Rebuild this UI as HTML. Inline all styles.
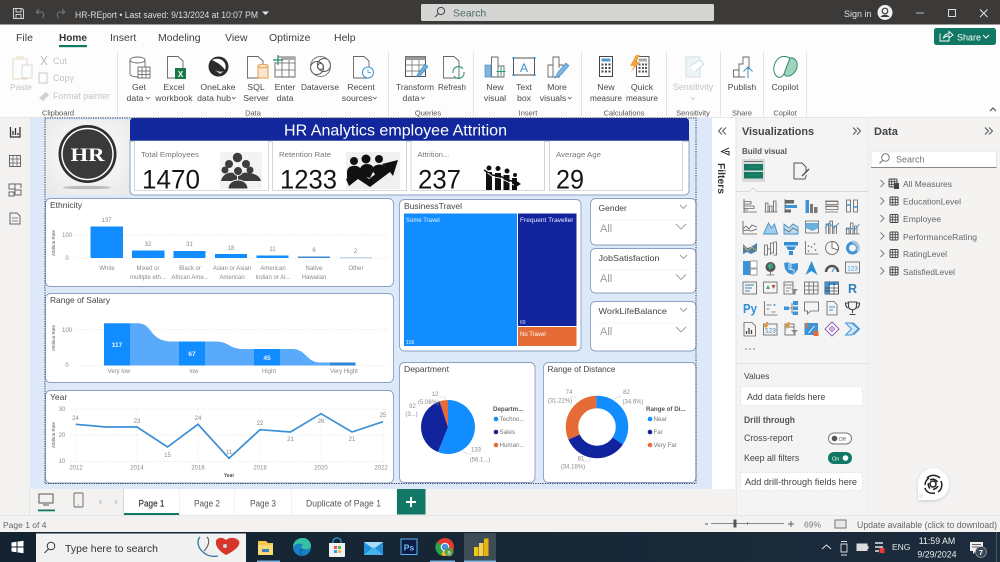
<!DOCTYPE html>
<html lang="en"><head><meta charset="utf-8"><title>HR Analytics</title>
<style>
html,body{margin:0;padding:0;background:#fff;width:1000px;height:562px;overflow:hidden}
svg{display:block;font-family:"Liberation Sans",sans-serif;filter:blur(.35px)}
.r{font-size:8.7px;fill:#4a4a4a;text-anchor:middle}
.d{font-size:9px;fill:#c4c4c4}
.gl{font-size:7.5px;fill:#555;text-anchor:middle}
.t{font-size:10.5px;fill:#3f3f3f}
.ct{font-size:8.5px;fill:#444}
.c{font-size:6px;fill:#8a8a8a;text-anchor:middle}
.a{font-size:5px;fill:#555;text-anchor:middle}
.k{font-size:7.5px;fill:#777}
.n{font-size:27px;fill:#151515}
.p{font-size:9px;fill:#444}
.tr{font-size:8.5px;fill:#666}
.s{stroke:#666;fill:none;stroke-width:.85}
.l{stroke:#666;fill:none;stroke-width:.9}
.sc{stroke:#8a8a8a;fill:none;stroke-width:1}
.b{fill:#3d93d6}
.card{fill:#fff;stroke:#8ba0c2;stroke-width:.9}
.grid{stroke:#e8e8e8;stroke-width:.7;stroke-dasharray:1.5 1.5}
</style></head>
<body>
<svg width="1000" height="562" viewBox="0 0 1000 562" xmlns="http://www.w3.org/2000/svg">
<defs>
<symbol id="tbl" viewBox="0 0 10 10"><rect x="1" y="1" width="8" height="8" rx="1" fill="none" stroke="#444" stroke-width="1"/><path d="M1 3.7H9M1 6.3H9M3.7 1V9M6.3 1V9" stroke="#444" stroke-width=".8"/></symbol>
</defs>
<!-- base -->
<rect width="1000" height="562" fill="#fdfdfd"/>
<!-- title bar -->
<rect width="1000" height="24.5" fill="#3b3a39"/>
<g fill="none" stroke="#d0d0d0" stroke-width="1">
<path d="M13.5 8.5H22L23.5 10V18.5H13.5Z"/><path d="M16 8.5V12H21V8.5M16 18.5V14.5H21V18.5"/>
</g>
<path d="M36 12L39 9M36 12L39 14M36 12H42A3.5 3.5 0 0 1 42 18" fill="none" stroke="#777" stroke-width="1"/>
<path d="M65 12L62 9M65 12L62 14M65 12H59A3.5 3.5 0 0 0 59 18" fill="none" stroke="#777" stroke-width="1"/>
<text x="75" y="18" font-size="9" fill="#dedede" textLength="183" lengthAdjust="spacingAndGlyphs">HR-REport • Last saved: 9/13/2024 at 10:07 PM</text>
<path d="M262 11.5h7l-3.5 3.5z" fill="#e8e8e8"/>
<rect x="421" y="4" width="293" height="17" rx="1.5" fill="#d5d6d3"/>
<circle cx="441" cy="11" r="3.6" fill="none" stroke="#444" stroke-width="1"/><path d="M438.4 13.6L435 17" stroke="#444" stroke-width="1"/>
<text x="453" y="16.5" font-size="10.5" fill="#4f6b66">Search</text>
<text x="844" y="17" font-size="9" fill="#e0e0e0">Sign in</text>
<circle cx="885" cy="12.5" r="7.5" fill="#f2f2f2"/><circle cx="885" cy="11" r="2.8" fill="none" stroke="#3b3a39" stroke-width="1.2"/><path d="M880.5 17a5 4 0 0 1 9 0" fill="#3b3a39"/>
<path d="M916 13H924" stroke="#bbb" stroke-width="1"/>
<rect x="948.5" y="9.5" width="7" height="7" fill="none" stroke="#ddd" stroke-width="1"/>
<path d="M980 9.5L987.5 17M987.5 9.5L980 17" stroke="#e5e5e5" stroke-width="1"/>
<!-- tabs -->
<text x="16" y="41" class="t">File</text>
<text x="59" y="41" class="t" style="font-weight:700;fill:#333" textLength="28" lengthAdjust="spacingAndGlyphs">Home</text>
<rect x="59" y="45" width="28" height="2.2" fill="#117865"/>
<text x="110" y="41" class="t">Insert</text>
<text x="158" y="41" class="t">Modeling</text>
<text x="225" y="41" class="t">View</text>
<text x="269" y="41" class="t">Optimize</text>
<text x="334" y="41" class="t">Help</text>
<rect x="934" y="28" width="62" height="17" rx="2.5" fill="#117865"/>
<path d="M940 33.5V41H949V38M943.5 38C944 35 946 33.8 949 33.8V31.5L953 35L949 38V36C947 36 945 36.5 943.5 38Z" fill="none" stroke="#fff" stroke-width=".9"/>
<text x="957" y="40.5" font-size="9" fill="#fff">Share</text>
<path d="M983 35l3 3 3-3" fill="none" stroke="#fff" stroke-width="1"/>
<!-- ribbon separators -->
<g stroke="#e3e3e3" stroke-width="1">
<path d="M117.5 52V116M388.5 52V116M473.5 52V116M581.5 52V116M666.5 52V116M720.5 52V116M763.5 52V116M806.5 52V116"/>
</g>
<!-- clipboard -->
<g fill="none" stroke="#e9d9c4" stroke-width="1"><path d="M13 59H27V79H13Z"/><path d="M17 59V57H23V59"/></g>
<rect x="22" y="65" width="10" height="13" fill="#fdfdfd" stroke="#d8d8d8"/>
<text x="21" y="90" class="d" text-anchor="middle" style="font-size:8.5px">Paste</text>
<path d="M41 56L47 65M47 56L41 65" stroke="#bcbcbc" fill="none"/><text x="53" y="64" class="d">Cut</text>
<rect x="39" y="73" width="8" height="10" fill="none" stroke="#c9c9c9"/><text x="53" y="81" class="d">Copy</text>
<path d="M39 98L46 92L49 95L43 101Z" fill="#cfcfcf"/><text x="53" y="99" class="d" textLength="57" lengthAdjust="spacingAndGlyphs">Format painter</text>
<text x="58" y="115.5" class="gl">Clipboard</text>
<!-- get data -->
<g class="l"><ellipse cx="137.5" cy="60" rx="7.5" ry="3"/><path d="M130 60V74C130 76 134 77 138 77M145 60V67"/></g>
<rect x="138" y="67" width="12" height="11" fill="#fdfdfd" stroke="#555" stroke-width=".8"/><path d="M138 71H150M138 74.500H150M142 67V78M146 67V78" stroke="#555" stroke-width=".7"/>
<text x="139" y="90" class="r">Get</text><text x="135" y="101" class="r">data</text><path d="M146 97l1.800 2 1.800-2" class="l"/>
<!-- excel -->
<path d="M167.500 56.500H178L183 61V78H167.500Z" class="l"/><rect x="175" y="68" width="11" height="11" fill="#1a7a45"/><text x="180.500" y="77" font-size="8" font-weight="700" fill="#fff" text-anchor="middle">X</text>
<text x="174" y="90" class="r">Excel</text><text x="174" y="101" class="r">workbook</text>
<!-- onelake -->
<circle cx="218.500" cy="66.500" r="10" fill="#2b2b2b"/><path d="M212 60C220 56 228 62 225 70C221 64 216 62 212 60Z" fill="#fff"/><path d="M215 70C219 72 222 72 224 71L220 74Z" fill="#cfcfcf"/>
<text x="218" y="90" class="r">OneLake</text><text x="214" y="101" class="r">data hub</text><path d="M232 97l1.800 2 1.800-2" class="l"/>
<!-- sql -->
<path d="M247.500 56.500H258L263 61V78H247.500Z" class="l"/><path d="M258 66V78H268V66" fill="#fbe7cf" stroke="#e69b45"/><ellipse cx="263" cy="66" rx="5" ry="1.800" fill="#fbe7cf" stroke="#e69b45"/>
<text x="256" y="90" class="r">SQL</text><text x="256" y="101" class="r">Server</text>
<!-- enter data -->
<path d="M278 57H295V77H275V62" class="l"/><path d="M275 63H295M275 70H295M282 57V77M289 57V77" stroke="#666" stroke-width=".8"/><rect x="282" y="57" width="13" height="3" fill="#aaa"/><path d="M273 60H283M278 55V65" stroke="#1f8a5b" stroke-width="1.200"/>
<text x="285" y="90" class="r">Enter</text><text x="285" y="101" class="r">data</text>
<!-- dataverse -->
<g fill="none" stroke="#555" stroke-width="1"><circle cx="317" cy="68" r="6.500"/><circle cx="324" cy="65" r="6.500"/><circle cx="320.500" cy="66.500" r="10" stroke="#777"/><circle cx="320.500" cy="66.500" r="3"/></g>
<text x="320" y="90" class="r" textLength="38" lengthAdjust="spacingAndGlyphs">Dataverse</text>
<!-- recent -->
<path d="M353.500 56.500H364L369 61V78H353.500Z" class="l"/><circle cx="368" cy="72.500" r="5.500" fill="#fff" stroke="#3b93cc"/><path d="M368 69.500V72.500H371" fill="none" stroke="#3b93cc" stroke-width=".8"/>
<text x="361" y="90" class="r">Recent</text><text x="357" y="101" class="r">sources</text><path d="M373 97l1.800 2 1.800-2" class="l"/>
<text x="253" y="115.500" class="gl">Data</text>
<!-- transform -->
<rect x="405.500" y="56.500" width="20" height="20" fill="none" stroke="#555"/><rect x="405.500" y="56.500" width="20" height="3.500" fill="#999"/><path d="M405.500 65H425.500M405.500 71H425.500M412 60V77M419 60V77" stroke="#666" stroke-width=".7"/>
<path d="M416 77L419 72L425 64L428 66.500L421 75Z" fill="#6fb1de" stroke="#3b7fb5" stroke-width=".6"/>
<text x="415" y="90" class="r" textLength="38" lengthAdjust="spacingAndGlyphs">Transform</text><text x="411" y="101" class="r">data</text><path d="M421 97l1.800 2 1.800-2" class="l"/>
<!-- refresh -->
<path d="M443.500 56.500H454L459 61V78H443.500Z" class="l"/><path d="M453 73A5.500 5.500 0 0 1 463 69M464 72A5.500 5.500 0 0 1 454 76" fill="none" stroke="#2f9a74" stroke-width="1.100"/>
<text x="452" y="90" class="r" textLength="28" lengthAdjust="spacingAndGlyphs">Refresh</text>
<text x="428" y="115.500" class="gl">Queries</text>
<line x1="473.500" y1="52" x2="473.500" y2="116" stroke="#e3e3e3"/>
<!-- new visual -->
<rect x="485" y="65" width="6" height="12" fill="#7db6e2" stroke="#3a86c2" stroke-width=".6"/><path d="M491.500 77V57H498V77M498 66H504V77H491.500" class="l"/><path d="M501 67V76M496.500 71.500H505.500" stroke="#2f9a74" stroke-width="1"/>
<text x="495" y="90" class="r">New</text><text x="495" y="101" class="r">visual</text>
<!-- text box -->
<rect x="513.500" y="58" width="21" height="17" fill="none" stroke="#555"/><g fill="#3b8fcf"><rect x="512.500" y="57" width="2" height="2"/><rect x="533.500" y="57" width="2" height="2"/><rect x="512.500" y="74" width="2" height="2"/><rect x="533.500" y="74" width="2" height="2"/></g>
<text x="524" y="72" font-size="12" fill="#3b8fcf" text-anchor="middle">A</text>
<text x="524" y="90" class="r">Text</text><text x="524" y="101" class="r">box</text>
<!-- more visuals -->
<path d="M548 65H553V77H548ZM553 77V57H559V68M559 65H563V69M553 77H560" class="l"/><path d="M555 78L558 72L566 63L569 65.500L561 75Z" fill="#7db6e2" stroke="#3a86c2" stroke-width=".6"/>
<text x="557" y="90" class="r">More</text><text x="553" y="101" class="r">visuals</text><path d="M568 97l1.800 2 1.800-2" class="l"/>
<text x="528" y="115.500" class="gl">Insert</text>
<!-- new measure -->
<rect x="599.500" y="56.500" width="13" height="20" fill="#fff" stroke="#444"/><rect x="601.500" y="58.500" width="9" height="3" fill="#4a9ad4"/><g fill="#444"><rect x="601.500" y="63.500" width="2" height="2"/><rect x="605" y="63.500" width="2" height="2"/><rect x="608.500" y="63.500" width="2" height="2"/><rect x="601.500" y="67" width="2" height="2"/><rect x="605" y="67" width="2" height="2"/><rect x="608.500" y="67" width="2" height="2"/><rect x="601.500" y="70.500" width="2" height="2"/><rect x="605" y="70.500" width="2" height="2"/><rect x="608.500" y="70.500" width="2" height="2"/></g>
<text x="606" y="90" class="r">New</text><text x="606" y="101" class="r" textLength="32" lengthAdjust="spacingAndGlyphs">measure</text>
<!-- quick measure -->
<rect x="636.500" y="56.500" width="12.500" height="20" fill="#fff" stroke="#555"/><rect x="638.500" y="58.500" width="8.500" height="3" fill="#aaa"/><g fill="#555"><rect x="638.500" y="63.500" width="2" height="2"/><rect x="642" y="63.500" width="2" height="2"/><rect x="645" y="63.500" width="2" height="2"/><rect x="638.500" y="67" width="2" height="2"/><rect x="642" y="67" width="2" height="2"/><rect x="645" y="67" width="2" height="2"/><rect x="638.500" y="70.500" width="2" height="2"/><rect x="642" y="70.500" width="2" height="2"/><rect x="645" y="70.500" width="2" height="2"/></g>
<path d="M636 55L630 66H634L631 72L640 62H636L640 55Z" fill="#f2a33a"/>
<text x="642" y="90" class="r">Quick</text><text x="642" y="101" class="r" textLength="32" lengthAdjust="spacingAndGlyphs">measure</text>
<text x="624" y="115.500" class="gl">Calculations</text>
<!-- sensitivity -->
<path d="M686 57H700V77H686Z" fill="#eef5f8" stroke="#cfe0e6"/><path d="M690 66L700 60L704 64L695 72" fill="#fff" stroke="#cfd8db"/>
<text x="693" y="90" class="d" text-anchor="middle">Sensitivity</text><path d="M691 97.500l1.800 2 1.800-2" fill="none" stroke="#ccc"/>
<text x="693" y="115.500" class="gl">Sensitivity</text>
<!-- publish -->
<path d="M733.500 77V70H739V77ZM739 77V64H743V57H749V69M739 77H745" class="l"/><path d="M748 78V68M743.500 71.500L748 67L752.500 71.500" fill="none" stroke="#3f8fb5" stroke-width="1"/>
<text x="742" y="90" class="r">Publish</text><text x="742" y="115.500" class="gl">Share</text>
<!-- copilot -->
<path d="M779 58C783 55 788 57 790 58L784 74C781 79 777 78 775 74C772 68 775 61 779 58Z" fill="#fff" stroke="#2f8a6b" stroke-width="1"/>
<path d="M790 58C795 57 798 62 797 67C796 73 790 77 786 76L784 74L790 58Z" fill="#9fd5bd" stroke="#2f8a6b" stroke-width="1"/>
<text x="785" y="90" class="r">Copilot</text><text x="785" y="115.500" class="gl">Copilot</text>
<path d="M990 111l3-3 3 3" fill="none" stroke="#444" stroke-width="1"/>

<!-- left rail + canvas -->
<rect x="0" y="117" width="1000" height="399" fill="#f3f2f1"/>
<line x1="0" y1="117.500" x2="1000" y2="117.500" stroke="#e6e6e6"/>
<rect x="30" y="118" width="682" height="371" fill="#dde9f9"/>
<g>
<path d="M10.500 127V137H20V127M13 135V131M15.500 135V128M18 135V133" fill="none" stroke="#333" stroke-width="1.300"/>
<rect x="9.500" y="155.500" width="11" height="11" fill="none" stroke="#666"/><path d="M9.500 159H20.500M9.500 163H20.500M13 155.500V166.500M17 155.500V166.500" stroke="#666" stroke-width=".8"/>
<rect x="9" y="184" width="6" height="5" fill="none" stroke="#666"/><rect x="15" y="190" width="6" height="5" fill="none" stroke="#666"/><rect x="9" y="192" width="5" height="4" fill="none" stroke="#666"/><path d="M15 184H21V188" fill="none" stroke="#666"/>
<path d="M10 213H17L20 216V224H10Z" fill="none" stroke="#666"/><path d="M12 218H18M12 221H18" stroke="#666" stroke-width=".8"/>
</g>
<!-- logo -->
<defs><radialGradient id="lg" cx=".5" cy=".45" r=".7"><stop offset="0" stop-color="#fff"/><stop offset="1" stop-color="#e9e9e9"/></radialGradient></defs>
<rect x="46" y="120" width="84" height="75" fill="url(#lg)"/>
<ellipse cx="87" cy="187.500" rx="24" ry="1.800" fill="#999" opacity=".6"/>
<circle cx="87.500" cy="154" r="29" fill="#2f2f2f"/><circle cx="87.500" cy="154" r="25.500" fill="#3a3a3a" stroke="#fff" stroke-width="1.500"/>
<text x="87.500" y="161" font-weight="700" font-size="19" fill="#fff" text-anchor="middle" textLength="34" lengthAdjust="spacingAndGlyphs" style="font-family:'Liberation Serif',serif">HR</text>
<!-- header -->
<path d="M130 141V122Q130 118 134 118H685Q689 118 689 122V141Z" fill="#12279b"/>
<text x="284" y="135.500" font-size="15.500" fill="#fff" textLength="223" lengthAdjust="spacingAndGlyphs">HR Analytics employee Attrition</text>
<path d="M130 141H689V190Q689 195 684 195H135Q130 195 130 190Z" fill="#fff" stroke="#8ca3c6" stroke-width="1"/>
<g fill="#fff" stroke="#c8ccd2" stroke-width=".8">
<path d="M134.500 141V190.500H268.500V141"/><path d="M272.500 141V190.500H406.500V141"/><path d="M411 141V190.500H544.500V141"/><path d="M549.500 141V190.500H682.500V141"/>
</g>
<text x="141" y="157" class="k" textLength="58" lengthAdjust="spacingAndGlyphs">Total Employees</text>
<text x="279" y="157" class="k" textLength="52" lengthAdjust="spacingAndGlyphs">Retention Rate</text>
<text x="417.500" y="157" class="k">Attrition...</text>
<text x="556" y="157" class="k" textLength="45" lengthAdjust="spacingAndGlyphs">Average Age</text>
<text x="142" y="188.500" class="n" textLength="58" lengthAdjust="spacingAndGlyphs">1470</text>
<text x="280" y="188.500" class="n" textLength="57" lengthAdjust="spacingAndGlyphs">1233</text>
<text x="418" y="188.500" class="n" textLength="43" lengthAdjust="spacingAndGlyphs">237</text>
<text x="556" y="188.500" class="n" textLength="28" lengthAdjust="spacingAndGlyphs">29</text>
<!-- group icon -->
<rect x="220" y="152" width="42" height="37" fill="#f3f3f3"/>
<g fill="#3d3d3d">
<circle cx="237.500" cy="157.500" r="4.700"/><circle cx="229" cy="164" r="4"/><circle cx="246" cy="164" r="4"/><circle cx="225" cy="170" r="3.500"/><circle cx="250" cy="170" r="3.500"/>
<path d="M221 183C221 172 235 170 237 176V181H221Z"/><path d="M261 182C261 172 240 170 238 176V181H261Z"/>
<circle cx="238" cy="171" r="4.500" stroke="#f3f3f3" stroke-width="1"/>
<path d="M228 189C228 177 248 177 248 189Z" stroke="#f3f3f3" stroke-width="1"/>
</g>
<!-- retention icon -->
<rect x="346" y="152" width="54" height="37" fill="#f0f0f0"/>
<g fill="#111">
<circle cx="354" cy="161" r="4"/><circle cx="366" cy="159" r="4.500"/><circle cx="379" cy="159" r="4"/>
<path d="M347 172C347 164 360 164 361 170L361 176L347 178Z"/><path d="M360 170C360 162 374 162 374 170L370 178L360 176Z"/><path d="M372 170C373 163 385 163 385 168L376 176Z"/>
<path d="M346 179L358 172L369 179L385 167L382 164L398 160L393 176L390 172L370 187L358 179L349 186Z"/>
</g>
<!-- attrition icon -->
<g fill="#111">
<circle cx="489" cy="168" r="2.500"/><rect x="486" y="172" width="6" height="18"/>
<circle cx="498" cy="168.500" r="2.500"/><rect x="495" y="173" width="6" height="17"/>
<circle cx="507" cy="171" r="2.500"/><rect x="503.500" y="175" width="6" height="15"/>
<circle cx="515" cy="175" r="2"/><rect x="512" y="178" width="5" height="12"/>
</g>
<path d="M484 170L492 175L500 176L508 180L519 183" fill="none" stroke="#111" stroke-width="1.500"/>
<path d="M487.500 173L493 177L500 178L508 182L514 185" fill="none" stroke="#fff" stroke-width=".9"/>
<path d="M516 181L521 184L516 187Z" fill="#111"/>

<!-- ethnicity -->
<rect x="45.500" y="198.500" width="348" height="88" rx="5" class="card"/>
<text x="50" y="208" class="ct">Ethnicity</text>
<text transform="translate(55,243) rotate(-90)" class="a" style="font-size:4.500px">Attrition Rate</text>
<text x="67" y="237" class="c">100</text><text x="67" y="260" class="c">0</text>
<path d="M75 235H388M75 258H388" class="grid"/>
<rect x="90.500" y="226.500" width="32.500" height="31.500" fill="#118dff"/>
<rect x="132" y="250.500" width="32.500" height="7.500" fill="#118dff"/>
<rect x="173.500" y="251" width="32" height="7" fill="#118dff"/>
<rect x="215" y="254" width="32" height="4" fill="#118dff"/>
<rect x="256.500" y="255.500" width="32" height="2.500" fill="#118dff"/>
<rect x="298" y="256.500" width="32" height="1.500" fill="#3d8bd0"/>
<rect x="339.500" y="257" width="32.500" height="1.500" fill="#c2d8e4"/>
<text x="106.500" y="222" class="c">137</text><text x="148" y="246" class="c">32</text><text x="189.500" y="246" class="c">31</text><text x="231" y="250" class="c">18</text><text x="272.500" y="251" class="c">11</text><text x="314" y="252" class="c">6</text><text x="355.500" y="253" class="c">2</text>
<text x="107" y="270" class="c">White</text>
<text x="148" y="270" class="c">Mixed or</text><text x="148" y="279" class="c">multiple eth...</text>
<text x="190" y="270" class="c">Black or</text><text x="190" y="279" class="c">African Ame...</text>
<text x="232" y="270" class="c">Asian or Asian</text><text x="232" y="279" class="c">American</text>
<text x="273" y="270" class="c">American</text><text x="273" y="279" class="c">Indian or Al...</text>
<text x="314" y="270" class="c">Native</text><text x="314" y="279" class="c">Hawaiian</text>
<text x="356" y="270" class="c">Other</text>

<!-- salary -->
<rect x="45.500" y="293.500" width="348" height="89" rx="5" class="card"/>
<text x="50" y="303" class="ct" textLength="60" lengthAdjust="spacingAndGlyphs">Range of Salary</text>
<text transform="translate(55,338) rotate(-90)" class="a" style="font-size:4.500px">Attrition Rate</text>
<text x="67" y="332" class="c">100</text><text x="67" y="367" class="c">0</text>
<path d="M75 329.500H388M80 365.500H388" class="grid"/>
<g fill="#5aaafb">
<path d="M130 323.300H138C153 323.500 149 341 171 341.500H179V365.500H130Z"/>
<path d="M205 341.500H216C229 341.500 229 349 243 349H254V365.500H205Z"/>
<path d="M280 349H293C307 350 306 362 320 362.500H330V365.500H280Z"/>
</g>
<g fill="#118dff">
<rect x="104" y="323.300" width="26" height="42.200"/><rect x="179" y="341.500" width="26" height="24"/><rect x="254" y="349" width="26" height="16.500"/>
</g>
<rect x="330" y="362.500" width="25.500" height="3" fill="#2e86d6"/>
<g style="font-size:6.500px" fill="#e9f3ff" font-weight="700" text-anchor="middle">
<text x="117" y="347">117</text><text x="192" y="356">67</text><text x="267" y="360">45</text></g>
<text x="119" y="373" class="c">Very low</text><text x="194" y="373" class="c">low</text><text x="269" y="373" class="c">Hight</text><text x="344" y="373" class="c">Very Hight</text>

<!-- year -->
<rect x="45.500" y="390.500" width="348" height="92.500" rx="5" class="card"/>
<text x="50" y="400" class="ct">Year</text>
<text transform="translate(55,435) rotate(-90)" class="a" style="font-size:4.500px">Attrition Rate</text>
<text x="62" y="411" class="c">30</text><text x="62" y="437" class="c">20</text><text x="62" y="463" class="c">10</text>
<path d="M70 409H388M70 435H388M70 461.500H388" class="grid"/>
<path d="M76 409V462M137 409V462M198 409V462M260 409V462M321 409V462M383 409V462" class="grid"/>
<path d="M75.700 424.300L106 427L137 427L167.500 447L198 424.300L229 458.300L260 429.700L290.500 432L321 413.700L352 432L383 421.700" fill="none" stroke="#3a8ed6" stroke-width="1.700"/>
<g class="c"><text x="75.500" y="420" class="c">24</text><text x="137" y="423" class="c">23</text><text x="167.500" y="457" class="c">15</text><text x="198" y="420" class="c">24</text><text x="229" y="454" class="c">11</text><text x="260" y="425" class="c">22</text><text x="290.500" y="441" class="c">21</text><text x="321" y="423" class="c">26</text><text x="352" y="441" class="c">21</text><text x="383" y="417" class="c">25</text></g>
<g><text x="76" y="469.500" class="c">2012</text><text x="137" y="469.500" class="c">2014</text><text x="198" y="469.500" class="c">2016</text><text x="260" y="469.500" class="c">2018</text><text x="321" y="469.500" class="c">2020</text><text x="381" y="469.500" class="c">2022</text></g>
<text x="229" y="477" class="a" style="font-weight:700">Year</text>

<!-- treemap -->
<rect x="399.500" y="199.500" width="181.500" height="151.500" rx="5" class="card"/>
<text x="404" y="209" class="ct" style="font-size:8px" textLength="58" lengthAdjust="spacingAndGlyphs">BusinessTravel</text>
<rect x="404" y="213.500" width="113" height="132.500" fill="#118dff"/>
<rect x="518" y="213.500" width="58.500" height="112.500" fill="#12239e"/>
<rect x="518" y="327" width="58.500" height="19" fill="#e66c37"/>
<text x="406" y="222" font-size="6" fill="#eaf4ff">Some Travel</text>
<text x="520" y="222" font-size="6" fill="#eaf0ff" textLength="53.500" lengthAdjust="spacingAndGlyphs">Frequent Traveller</text>
<text x="520" y="336" font-size="6" fill="#fff">No Travel</text>
<text x="406" y="344" font-size="5" fill="#e6f2ff">156</text>
<text x="520" y="324" font-size="5" fill="#d8def8">69</text>

<!-- slicers -->
<g>
<rect x="590.500" y="198.500" width="105.500" height="46.500" rx="5" class="card"/>
<rect x="590.500" y="248.500" width="105.500" height="44.500" rx="5" class="card"/>
<rect x="590.500" y="301.500" width="105.500" height="49.500" rx="5" class="card"/>
</g>
<g class="ct" style="font-size:8.500px">
<text x="598.500" y="211" class="ct">Gender</text><text x="598.500" y="261" class="ct" textLength="61" lengthAdjust="spacingAndGlyphs">JobSatisfaction</text><text x="598.500" y="314" class="ct" textLength="68.500" lengthAdjust="spacingAndGlyphs">WorkLifeBalance</text>
</g>
<g font-size="11" fill="#9a9a9a"><text x="600" y="232">All</text><text x="600" y="282">All</text><text x="600" y="335">All</text></g>
<g fill="none" stroke="#9b9b9b" stroke-width=".9">
<path d="M680 205l3.500 3.500 3.500-3.500M676 224l5 5 5-5" /><path d="M680 255l3.500 3.500 3.500-3.500M676 274.500l5 5 5-5"/><path d="M680 308l3.500 3.500 3.500-3.500M676 327l5 5 5-5"/>
</g>
<path d="M597 220H687M597 270H687M597 323H687" stroke="#f2f2f2" stroke-width=".7"/>

<!-- department -->
<rect x="399.500" y="362.500" width="135.500" height="120" rx="5" class="card"/>
<text x="404" y="372" class="ct" textLength="45" lengthAdjust="spacingAndGlyphs">Department</text>
<path d="M448 427L448 400A27 27 0 1 1 437.900 452.040Z" fill="#118dff"/>
<path d="M448 427L437.900 452.040A27 27 0 0 1 439.560 401.350Z" fill="#12239e"/>
<path d="M448 427L439.560 401.350A27 27 0 0 1 448 400Z" fill="#e66c37"/>
<path d="M446 400L445 397H438M462 451L467 454H472" fill="none" stroke="#ccc" stroke-width=".6"/>
<text x="435" y="396" class="c">12</text><text x="428.500" y="404" class="c">(5.06%)</text><text x="412.500" y="408" class="c">92</text><text x="411.500" y="416" class="c">(3...)</text><text x="476" y="451.500" class="c">133</text><text x="480" y="461.500" class="c">(56.1...)</text>
<text x="493" y="411" font-size="6.200" font-weight="700" fill="#555">Departm...</text>
<circle cx="496" cy="419" r="2.300" fill="#118dff"/><circle cx="496" cy="432" r="2.300" fill="#12239e"/><circle cx="496" cy="445" r="2.300" fill="#e66c37"/>
<g font-size="6.200" fill="#777"><text x="499.500" y="421">Techno...</text><text x="499.500" y="434">Sales</text><text x="499.500" y="447">Human...</text></g>

<!-- distance -->
<rect x="543.500" y="362.500" width="152.500" height="120" rx="5" class="card"/>
<text x="547.500" y="372" class="ct" textLength="68" lengthAdjust="spacingAndGlyphs">Range of Distance</text>
<g fill="none" stroke-width="12.500" transform="rotate(-90 597 427)">
<circle cx="597" cy="427" r="25" pathLength="100" stroke="#118dff" stroke-dasharray="34.6 65.4"/>
<circle cx="597" cy="427" r="25" pathLength="100" stroke="#12239e" stroke-dasharray="34.18 65.82" stroke-dashoffset="-34.6"/>
<circle cx="597" cy="427" r="25" pathLength="100" stroke="#e66c37" stroke-dasharray="31.22 68.78" stroke-dashoffset="-68.78"/>
</g>
<path d="M576 398L570 396M614 399L621 396M590 458L590 461H584" fill="none" stroke="#ccc" stroke-width=".6"/>
<text x="569" y="394" class="c">74</text><text x="560" y="402.500" class="c">(31.22%)</text><text x="626.500" y="394" class="c">82</text><text x="633" y="403.500" class="c">(34.6%)</text><text x="581" y="460.500" class="c">81</text><text x="573" y="468.500" class="c">(34.18%)</text>
<text x="646" y="411" font-size="6.200" font-weight="700" fill="#555">Range of Di...</text>
<circle cx="650" cy="419" r="2.300" fill="#118dff"/><circle cx="650" cy="432" r="2.300" fill="#12239e"/><circle cx="650" cy="445" r="2.300" fill="#e66c37"/>
<g font-size="6.200" fill="#777"><text x="653.500" y="421">Near</text><text x="653.500" y="434">Far</text><text x="653.500" y="447">Very Far</text></g>

<!-- page dotted frame -->
<rect x="45" y="118" width="651" height="365.500" fill="none" stroke="#2f3a50" stroke-width="1" stroke-dasharray="1.200 1.200"/>

<!-- filters pane -->
<rect x="712" y="118" width="24" height="371" fill="#fff"/>
<path d="M726 127.500l-3.500 3.500 3.500 3.500M722 127.500l-3.500 3.500 3.500 3.500" fill="none" stroke="#555" stroke-width="1"/>
<path d="M729 148L721.500 151.500L729 155V151.500H725" fill="none" stroke="#333" stroke-width="1"/>
<text transform="translate(718,163) rotate(90)" font-size="10" font-weight="700" fill="#333" textLength="31" lengthAdjust="spacingAndGlyphs">Filters</text>
<!-- viz pane -->
<rect x="736" y="118" width="132" height="398" fill="#f4f4f4"/>
<line x1="736" y1="118" x2="736" y2="516" stroke="#e3e3e3"/>
<line x1="868" y1="118" x2="868" y2="516" stroke="#ebebeb"/>
<rect x="869" y="118" width="131" height="398" fill="#f4f3f2"/>
<text x="742" y="135" font-size="11" font-weight="700" fill="#444" textLength="72" lengthAdjust="spacingAndGlyphs">Visualizations</text>
<path d="M853 127.500l3.500 3.500-3.500 3.500M857 127.500l3.500 3.500-3.500 3.500" fill="none" stroke="#555" stroke-width="1"/>
<text x="874" y="135" font-size="11" font-weight="700" fill="#444">Data</text>
<path d="M985 127.500l3.500 3.500-3.500 3.500M989 127.500l3.500 3.500-3.500 3.500" fill="none" stroke="#555" stroke-width="1"/>
<text x="742" y="154" font-size="8.500" font-weight="700" fill="#555" textLength="45" lengthAdjust="spacingAndGlyphs">Build visual</text>
<rect x="742" y="159" width="23" height="23" fill="#d9d9d9"/>
<rect x="744" y="164" width="19" height="6.500" fill="#127a60"/><rect x="744" y="172" width="19" height="6.500" fill="#127a60"/><path d="M744 161.500H763" stroke="#777"/>
<path d="M748 167H759M748 175H759" stroke="#3aa788" stroke-width=".8" stroke-dasharray="1 1"/>
<path d="M794 179H805L806.500 175M794 179V163H802L806 167V172" fill="none" stroke="#555" stroke-width="1"/><path d="M802 176L809 169" stroke="#555" stroke-width="1.500"/>
<path d="M736 191.500H749L753 188L757 191.500H868" fill="none" stroke="#cfcfcf" stroke-width=".8"/>
<!-- viz icons -->
<g stroke-width=".9">
<!-- row1 -->
<g transform="translate(743,199)"><path d="M1 0V14M1 13H14" class="s"/><path d="M1 2.500H8V5H1ZM1 7H11V9.500H1ZM1 11H5" class="s"/></g>
<g transform="translate(763.500,199)"><path d="M1 13H14M2 13V4H4.500V13M6 13V7H8.500V13M10 13V2H12.500V13" class="s"/></g>
<g transform="translate(784,199)"><rect x="1" y="1" width="9" height="3.500" fill="#666"/><rect x="1" y="6" width="12" height="3" fill="#3d93d6"/><rect x="1" y="10.500" width="6" height="3" fill="#666"/><path d="M1 0V14" class="s"/></g>
<g transform="translate(804.500,199)"><rect x="1" y="1" width="3.500" height="13" fill="#3d93d6"/><rect x="5.500" y="5" width="3" height="9" fill="#777"/><rect x="9.500" y="8" width="3.500" height="6" fill="#777"/></g>
<g transform="translate(825,199)"><path d="M0 2H13M0 13H13M0 7H13" class="s"/><path d="M1 2.500H13V5.500H1ZM1 7.500H13V10.500H1Z" class="s"/></g>
<g transform="translate(845.500,199)"><path d="M1 13V1H5V13ZM8 13V1H12V13Z" class="s"/><path d="M1 6H5M8 8H12" stroke="#3d93d6" stroke-width="1.500"/></g>
<!-- row2 -->
<g transform="translate(743,220)"><path d="M0 14H14M0 1V14M0 9L3 6L6 9L9 5L14 7M0 11L4 10L8 11L14 9" class="s"/></g>
<g transform="translate(763.500,220)"><path d="M0 14L5 3L8 8L11 4L14 14Z" fill="#9fcdea" stroke="#4a8fc2"/></g>
<g transform="translate(784,220)"><path d="M0 4L5 8L9 4L14 7V14H0Z" fill="#bcdcf1" stroke="#4a8fc2"/><path d="M0 9L5 12L9 8L14 11" class="s"/></g>
<g transform="translate(804.500,220)"><path d="M1 1H14V13H1Z" class="s"/><path d="M1 3H14V8L8 11L1 8Z" fill="#6ab0de"/></g>
<g transform="translate(825,220)"><path d="M1 14V4H3.500V14M5 14V1H7.500V14M9 14V6H11.500V14" class="s"/><path d="M0 8L4 3L9 8L14 3" fill="none" stroke="#3d93d6"/></g>
<g transform="translate(845.500,220)"><path d="M1 14V8H3.500V14M5 14V3H7.500V14M9 14V6H11.500V14M0 14H14" class="s"/><path d="M0 10L5 8L9 10L14 4" fill="none" stroke="#3d93d6"/></g>
<!-- row3 -->
<g transform="translate(743,241)"><path d="M0 3L4 7L8 6L14 2V10L8 13L4 11L0 13Z" fill="#4a7fb0"/><path d="M0 5L5 10L9 6L14 10" fill="none" stroke="#d2a83e"/></g>
<g transform="translate(763.500,241)"><path d="M1 14V4H4V14ZM4 8H7V14M7 2H10V12H7ZM10 1H13V14H10" class="s"/></g>
<g transform="translate(784,241)"><rect x="0" y="1" width="14" height="3.500" fill="#2f8fd6"/><path d="M2 5.500H12L10 9H4ZM5 10H9V14H5Z" fill="#2f8fd6"/></g>
<g transform="translate(804.500,241)"><path d="M1 0V13H14" class="s"/><g fill="#666"><circle cx="4" cy="10" r=".8"/><circle cx="7" cy="6" r=".8"/><circle cx="11" cy="9" r=".8"/><circle cx="10" cy="3" r=".8"/><circle cx="4" cy="5" r=".8"/></g></g>
<g transform="translate(825,241)"><circle cx="7" cy="7" r="6.500" class="s"/><path d="M7 7V.5A6.500 6.500 0 0 1 13 9Z" fill="#fff" stroke="#555" stroke-width=".8"/></g>
<g transform="translate(845.500,241)"><circle cx="7" cy="7" r="5" fill="none" stroke="#3d93d6" stroke-width="3"/><path d="M7 1A6 6 0 0 1 12 10" fill="none" stroke="#a2c6df" stroke-width="3"/></g>
<!-- row4 -->
<g transform="translate(743,261)"><rect x="0" y="0" width="7" height="14" fill="#3d93d6"/><rect x="7.500" y="0" width="6.500" height="7" fill="#fff" stroke="#666" stroke-width=".6"/><rect x="7.500" y="8" width="6.500" height="6" fill="#fff" stroke="#666" stroke-width=".6"/></g>
<g transform="translate(763.500,261)"><circle cx="7" cy="6" r="5" fill="#555"/><path d="M4 4L8 2L10 6L6 9Z" fill="#3aa788"/><path d="M3 14H11M7 11V14" class="s"/></g>
<g transform="translate(784,261)"><path d="M0 2L5 1L7 3L14 2V8L10 14L4 12L1 8Z" fill="#3d93d6"/><path d="M5 1L5 8L10 9V14M7 3V8" fill="none" stroke="#fff" stroke-width=".8"/></g>
<g transform="translate(804.500,261)"><path d="M7 0L13 14L7 10L1 14Z" fill="#2f8fd6"/></g>
<g transform="translate(825,261)"><path d="M1 11A6 6 0 0 1 13 11" fill="none" stroke="#555" stroke-width="2.500"/><path d="M7 11L10 6" stroke="#3d93d6" stroke-width="1.200"/></g>
<g transform="translate(845.500,261)"><rect x="0" y="1" width="14" height="11" class="s"/><text x="7" y="9.500" font-size="6.500" fill="#3d93d6" text-anchor="middle">123</text></g>
<!-- row5 -->
<g transform="translate(743,281)"><rect x="0" y="1" width="13.500" height="12" class="s"/><path d="M2 4H11M2 7H9M2 10H7" stroke="#3d7fb5" stroke-width="1"/></g>
<g transform="translate(763.500,281)"><rect x="0" y="1" width="13.500" height="11" class="s"/><path d="M2.500 8L4.500 4L6.500 8Z" fill="#3aa788"/><path d="M8 4H12L10 8Z" fill="#c0513a"/></g>
<g transform="translate(784,281)"><rect x="0" y="1" width="9" height="12" class="s"/><path d="M0 4H9M2 7H7M2 10H5" class="s"/><path d="M7 8H14L11.500 10.500V14L9.500 13V10.500Z" fill="#888"/></g>
<g transform="translate(804.500,281)"><rect x="0" y="1" width="13.500" height="12" class="s"/><path d="M0 5H13.500M0 9H13.500M4.500 1V13M9 1V13" class="s"/></g>
<g transform="translate(825,281)"><rect x="0" y="1" width="13.500" height="12" fill="#fff" stroke="#444"/><rect x="0" y="1" width="13.500" height="3" fill="#3d93d6"/><rect x="0" y="1" width="4" height="12" fill="#3d93d6"/><path d="M0 7H13.500M0 10H13.500M4.500 1V13M9 1V13" stroke="#444" stroke-width=".7"/></g>
<text x="852.500" y="293" font-size="12.500" font-weight="700" fill="#2f7fb8" text-anchor="middle">R</text>
<!-- row6 -->
<text x="750" y="313" font-size="12.500" font-weight="700" fill="#2f8fd6" text-anchor="middle" textLength="14" lengthAdjust="spacingAndGlyphs">Py</text>
<g transform="translate(763.500,301)"><path d="M1 0V14H14M3 4H8M3 8H6M8 11H12" class="s"/><circle cx="11" cy="4" r="1" fill="#3d93d6"/></g>
<g transform="translate(784,301)"><rect x="0" y="5.500" width="5" height="3.500" fill="#3d93d6"/><path d="M5 7H8M8 2V12H10" class="s"/><rect x="9" y="0" width="5" height="4" fill="#3d93d6"/><rect x="9" y="5.500" width="5" height="3.500" fill="#3d93d6"/><rect x="9" y="10.500" width="5" height="3.500" fill="#3d93d6"/></g>
<g transform="translate(804.500,301)"><path d="M0 1H14V10H6L3 13V10H0Z" class="s"/></g>
<g transform="translate(825,301)"><path d="M2 0.500H9L12 3.500V14H2Z" class="s"/><path d="M4 6H10M4 9H8" stroke="#3d93d6"/></g>
<g transform="translate(845.500,301)"><path d="M3 1H11V5C11 10 3 10 3 5ZM3 2H0C0 6 2 7 3 7M11 2H14C14 6 12 7 11 7M7 9V12M4 13.500H10" fill="none" stroke="#444" stroke-width="1.100"/></g>
<!-- row7 -->
<g transform="translate(743,322)"><path d="M1 0.500H9L12.500 4V14H1Z" class="s"/><path d="M3.500 12V9M6 12V6M8.500 12V8" stroke="#444" stroke-width="1.300"/></g>
<g transform="translate(763.500,322)"><rect x="0" y="2" width="13.500" height="11" class="s"/><text x="7" y="10.500" font-size="6.500" fill="#3d7fb5" text-anchor="middle">123</text><path d="M3 0L0 5H2L1 8L5 3H3L5 0Z" fill="#e8912b"/></g>
<g transform="translate(784,322)"><rect x="1" y="2" width="9" height="11" class="s"/><path d="M1 5H10" class="s"/><path d="M7 8H14L11.500 10.500V14L9.500 13V10.500Z" fill="#888"/><path d="M4 0L1 5H3L2 8L6 3H4L6 0Z" fill="#e8912b"/></g>
<g transform="translate(804.500,322)"><rect x="0" y="1" width="13.500" height="12" fill="#3d93d6"/><path d="M3 0L1 4V7L4 4Z" fill="#d9782d"/><path d="M4 11L10 4" stroke="#fff"/><rect x="9" y="9" width="5" height="5" fill="#e66c37"/></g>
<g transform="translate(825,322)"><path d="M7 0L14 7L7 14L0 7Z" fill="#fff" stroke="#8a55b0"/><path d="M4 7L7 4L10 7L7 10Z" fill="#d5b8e6" stroke="#8a55b0" stroke-width=".6"/></g>
<g transform="translate(845.500,322)"><path d="M0 1H6L13 7L6 13H0L6 7Z" fill="#cfe6f5" stroke="#3d93d6"/><path d="M4 1H8L14 7L8 13" fill="none" stroke="#3d93d6"/></g>
</g>
<g fill="#777"><circle cx="746" cy="349" r=".8"/><circle cx="750" cy="349" r=".8"/><circle cx="754" cy="349" r=".8"/></g>
<line x1="736" y1="363.500" x2="868" y2="363.500" stroke="#e2e2e2"/>
<text x="744" y="379" font-size="8.500" fill="#444">Values</text>
<rect x="740.500" y="386.500" width="122" height="19" fill="#fff" stroke="#e0e0e0" stroke-dasharray="1.500 1.500"/>
<text x="747" y="400" font-size="8.800" fill="#444">Add data fields here</text>
<text x="744" y="423" font-size="8.800" font-weight="700" fill="#555" textLength="51" lengthAdjust="spacingAndGlyphs">Drill through</text>
<text x="744" y="441" font-size="8.800" fill="#444">Cross-report</text>
<rect x="828.500" y="433" width="23" height="11" rx="5.500" fill="#fff" stroke="#777"/><circle cx="834.500" cy="438.500" r="2.800" fill="#555"/><text x="838.500" y="441" font-size="5.500" fill="#666">Off</text>
<text x="744" y="461" font-size="8.800" fill="#444">Keep all filters</text>
<rect x="828" y="452" width="24" height="12" rx="6" fill="#117865"/><circle cx="845.500" cy="458" r="2.800" fill="#fff"/><text x="832" y="460.500" font-size="5.500" fill="#fff">On</text>
<rect x="740.500" y="472.500" width="122" height="18" fill="#fff" stroke="#e0e0e0" stroke-dasharray="1.500 1.500"/>
<text x="745" y="485" font-size="8.800" fill="#444" textLength="112" lengthAdjust="spacingAndGlyphs">Add drill-through fields here</text>
<!-- data pane -->
<rect x="871" y="151" width="125.500" height="16.500" rx="1.500" fill="#fff" stroke="#e5e5e5"/><line x1="871" y1="167.500" x2="996.500" y2="167.500" stroke="#888"/>
<circle cx="885.500" cy="157.500" r="3.800" fill="none" stroke="#666" stroke-width=".9"/><path d="M882.800 160.200L879.500 163.500" stroke="#666" stroke-width=".9"/>
<text x="896" y="162.500" font-size="9" fill="#777">Search</text>
<g fill="none" stroke="#777" stroke-width=".9">
<path d="M880.500 180l3.500 3.500-3.500 3.500M880.500 197.500l3.500 3.500-3.500 3.500M880.500 215l3.500 3.500-3.500 3.500M880.500 232.500l3.500 3.500-3.500 3.500M880.500 250l3.500 3.500-3.500 3.500M880.500 267.500l3.500 3.500-3.500 3.500"/>
</g>
<use href="#tbl" x="888" y="178" width="10" height="10"/><rect x="894" y="183" width="5" height="6" fill="#444"/>
<use href="#tbl" x="889" y="196" width="10" height="10"/>
<use href="#tbl" x="889" y="213.500" width="10" height="10"/>
<use href="#tbl" x="889" y="231" width="10" height="10"/>
<use href="#tbl" x="889" y="248.500" width="10" height="10"/>
<use href="#tbl" x="889" y="266" width="10" height="10"/>
<text x="903" y="187" class="tr" textLength="49" lengthAdjust="spacingAndGlyphs">All Measures</text>
<text x="903" y="204.500" class="tr" textLength="58" lengthAdjust="spacingAndGlyphs">EducationLevel</text>
<text x="903" y="222" class="tr" textLength="38" lengthAdjust="spacingAndGlyphs">Employee</text>
<text x="903" y="240" class="tr" textLength="74" lengthAdjust="spacingAndGlyphs">PerformanceRating</text>
<text x="903" y="257" class="tr" textLength="44" lengthAdjust="spacingAndGlyphs">RatingLevel</text>
<text x="903" y="275" class="tr" textLength="52" lengthAdjust="spacingAndGlyphs">SatisfiedLevel</text>
<!-- copilot float -->
<defs><filter id="sh" x="-40%" y="-40%" width="180%" height="180%"><feDropShadow dx="0" dy="1" stdDeviation="1.500" flood-color="#000" flood-opacity=".18"/></filter></defs>
<path d="M933 468A16 16 0 0 1 933 500H918V484A16 16 0 0 1 933 468Z" fill="#fff" filter="url(#sh)"/>
<g fill="none" stroke="#222" stroke-width="1.500">
<circle cx="933" cy="484" r="3"/><path d="M927 478C931 474 937 475 940 478M941 481C943 486 941 490 938 492M935 493C930 494 926 492 925 488M925 485C925 482 927 479 929 478"/><path d="M930 480C933 478 936 480 937.500 482M938 486C937 488 935 489 933 489.500M930 488.500C928.500 487 928 485 928.500 483"/>
</g>
<g fill="#aaa"><circle cx="920" cy="495" r=".5"/><circle cx="922" cy="495" r=".5"/><circle cx="920" cy="497" r=".5"/><circle cx="922" cy="497" r=".5"/></g>

<!-- page tabs -->
<rect x="0" y="489" width="736" height="27" fill="#f3f2f1"/>
<line x1="29.500" y1="489" x2="29.500" y2="515" stroke="#e2e2e2"/>
<rect x="39" y="494" width="14" height="9" fill="none" stroke="#555" stroke-width="1"/><path d="M43 505H49" stroke="#555"/>
<rect x="38" y="509.500" width="17" height="1.800" fill="#117865"/>
<rect x="74" y="493" width="9" height="14" rx="1" fill="none" stroke="#666" stroke-width=".9"/><circle cx="78.500" cy="505" r=".5" fill="#666"/>
<path d="M101.500 500l-2 2 2 2M115 500l2 2-2 2" fill="none" stroke="#bbb" stroke-width=".9"/>
<g fill="#fff"><rect x="124" y="489" width="55" height="27"/><rect x="180" y="489" width="54" height="26"/><rect x="235" y="489" width="56" height="26"/><rect x="292" y="489" width="104" height="26"/></g>
<path d="M123.500 489V515" stroke="#d7d7d7"/>
<rect x="124" y="513" width="55" height="2.300" fill="#117865"/>
<text x="151.500" y="506.500" class="p" text-anchor="middle" style="fill:#333;stroke:#333;stroke-width:.15" textLength="26" lengthAdjust="spacingAndGlyphs">Page 1</text>
<text x="207" y="506.500" class="p" text-anchor="middle" style="fill:#555" textLength="26" lengthAdjust="spacingAndGlyphs">Page 2</text>
<text x="263" y="506.500" class="p" text-anchor="middle" style="fill:#555" textLength="26" lengthAdjust="spacingAndGlyphs">Page 3</text>
<text x="343.500" y="506.500" class="p" text-anchor="middle" style="fill:#555" textLength="75" lengthAdjust="spacingAndGlyphs">Duplicate of Page 1</text>
<rect x="397" y="489" width="28.500" height="25.500" fill="#117865"/>
<path d="M411 497V507M406 502H416" stroke="#fff" stroke-width="2"/>
<!-- status bar -->
<rect x="0" y="516" width="1000" height="16" fill="#f3f2f1"/>
<line x1="0" y1="515.500" x2="1000" y2="515.500" stroke="#e6e6e6"/>
<text x="3" y="528" font-size="8.500" fill="#666">Page 1 of 4</text>
<path d="M705 524H708" stroke="#555"/>
<path d="M711 523.500H784" stroke="#666" stroke-width=".8"/><rect x="733.500" y="519.500" width="3" height="8" fill="#555"/><path d="M747.500 522V525" stroke="#666" stroke-width=".7"/>
<path d="M791 521V527M788 524H794" stroke="#555" stroke-width=".9"/>
<text x="804" y="527.500" font-size="8.500" fill="#777">69%</text>
<rect x="835" y="520" width="11" height="8" fill="#e8e8e8" stroke="#777"/>
<text x="857" y="528" font-size="9" fill="#666" textLength="140" lengthAdjust="spacingAndGlyphs">Update available (click to download)</text>
<!-- taskbar -->
<defs><linearGradient id="tb" x1="0" x2="1"><stop offset="0" stop-color="#132230"/><stop offset="1" stop-color="#1c2c3c"/></linearGradient></defs>
<rect x="0" y="532" width="1000" height="30" fill="url(#tb)"/>
<g fill="#fff"><path d="M11.500 542.500L16.500 541.800V546.500H11.500ZM17.500 541.600L23.500 540.800V546.500H17.500ZM11.500 547.500H16.500V552.200L11.500 551.500ZM17.500 547.500H23.500V553.200L17.500 552.400Z"/></g>
<rect x="36" y="533.500" width="210" height="28.500" fill="#f1f1f1"/>
<circle cx="51" cy="546" r="3.800" fill="none" stroke="#333" stroke-width="1"/><path d="M48.500 549L44.500 553" stroke="#333" stroke-width="1"/>
<text x="65" y="552" font-size="10.500" fill="#333" textLength="93" lengthAdjust="spacingAndGlyphs">Type here to search</text>
<path d="M200 537C197 540 197 547 203 552C207 556 213 557 218 556" fill="none" stroke="#3a7fa8" stroke-width="1.400"/>
<path d="M207 537C210 540 209 546 204 551" fill="none" stroke="#555" stroke-width="1"/>
<path d="M226 555C219 551 215 546 216 541C217 537 223 537 226 540C229 537 236 537 239 541C241 546 234 551 226 555Z" fill="#d6372a"/>
<circle cx="225" cy="546" r="2" fill="#c9d8e6"/>
<!-- task icons -->
<path d="M258 541H266L268 543H273V555H258Z" fill="#f4c84f"/><rect x="258" y="545" width="15" height="10" fill="#f7d978"/><rect x="262" y="549" width="7" height="3" fill="#3d7fb5"/>
<rect x="257" y="560.500" width="23" height="1.500" fill="#7db3df"/>
<circle cx="302" cy="547" r="9" fill="#1a7fc4"/><path d="M293 547C293 541 299 538 303 538C308 538 311 542 311 546C311 549 307 550 304 549C300 548 301 546 303 545C301 543 296 543 293 547Z" fill="#36c1a0"/><path d="M303 549C299 551 299 554 303 556" fill="none" stroke="#0d5fa0"/>
<path d="M329 543H345V556Q345 557 344 557H330Q329 557 329 556Z" fill="#f1f1f1"/><path d="M333 543V540Q337 536 341 540V543" fill="none" stroke="#2a9fd8" stroke-width="1.200"/><rect x="334" y="546" width="3" height="3" fill="#e55"/><rect x="338" y="546" width="3" height="3" fill="#5b5"/><rect x="334" y="550" width="3" height="3" fill="#39f"/><rect x="338" y="550" width="3" height="3" fill="#fb3"/>
<path d="M364 542H383V555H364Z" fill="#1e93dc"/><path d="M364 542L373.500 549L383 542Z" fill="#a8dcf7"/><path d="M364 555L373.500 547L383 555Z" fill="#4ab2ea"/>
<rect x="401" y="539" width="16" height="15.500" fill="#0c1c44" stroke="#5cb3f0" stroke-width="1"/><text x="409" y="550.500" font-size="8.500" font-weight="700" fill="#6ec1f5" text-anchor="middle">Ps</text>
<circle cx="445" cy="547" r="9" fill="#e33b2e"/><path d="M445 547L453 551A9 9 0 0 1 441 555Z" fill="#f5c02b"/><path d="M445 547L441 555.500A9 9 0 0 1 437 542Z" fill="#2aa34a"/><circle cx="445" cy="547" r="3.800" fill="#4a90e2" stroke="#fff" stroke-width="1"/><circle cx="449" cy="552" r="4.500" fill="#5b9a4a"/><text x="449" y="554.500" font-size="6" fill="#fff" text-anchor="middle">a</text>
<rect x="430" y="560.500" width="25" height="1.500" fill="#7db3df"/>
<rect x="464" y="533" width="32" height="29" fill="#3e4c58"/>
<rect x="474" y="547" width="4.500" height="9" fill="#f2c811"/><rect x="479" y="543" width="4.500" height="13" fill="#f5d34b"/><rect x="484" y="538.500" width="4.500" height="17.500" fill="#e8b50d"/>
<rect x="464" y="560.500" width="32" height="1.500" fill="#7db3df"/>
<!-- tray -->
<path d="M822 549L826.500 545L831 549" fill="none" stroke="#e5e5e5" stroke-width="1"/>
<path d="M841 541.500H847M841 544H847V552H841Z M841 555H847" fill="none" stroke="#ddd" stroke-width=".9"/>
<rect x="857" y="544" width="10" height="6.500" fill="#ddd" stroke="#ddd"/><rect x="867" y="546" width="1.500" height="3" fill="#ddd"/>
<path d="M875 543H883M875 547H883M875 551H879" stroke="#e5e5e5" stroke-width="1.600"/><rect x="879.500" y="548" width="5" height="5" fill="#e83a3a"/>
<text x="892" y="550" font-size="8.500" fill="#e5e5e5">ENG</text>
<text x="937" y="544" font-size="8.800" fill="#ededed" text-anchor="middle">11:59 AM</text>
<text x="937" y="557.500" font-size="8.800" fill="#ededed" text-anchor="middle">9/29/2024</text>
<path d="M970 542H983V551H976L973 554V551H970Z" fill="#efefef"/><path d="M972 544.500H981M972 547H981" stroke="#333" stroke-width=".7"/>
<circle cx="981" cy="552" r="5.500" fill="#3a4754" stroke="#aaa" stroke-width=".6"/><text x="981" y="555" font-size="7.500" font-weight="700" fill="#fff" text-anchor="middle">7</text>
<line x1="996.500" y1="532" x2="996.500" y2="562" stroke="#4a5866" stroke-width="1"/>
</svg>
</body></html>
